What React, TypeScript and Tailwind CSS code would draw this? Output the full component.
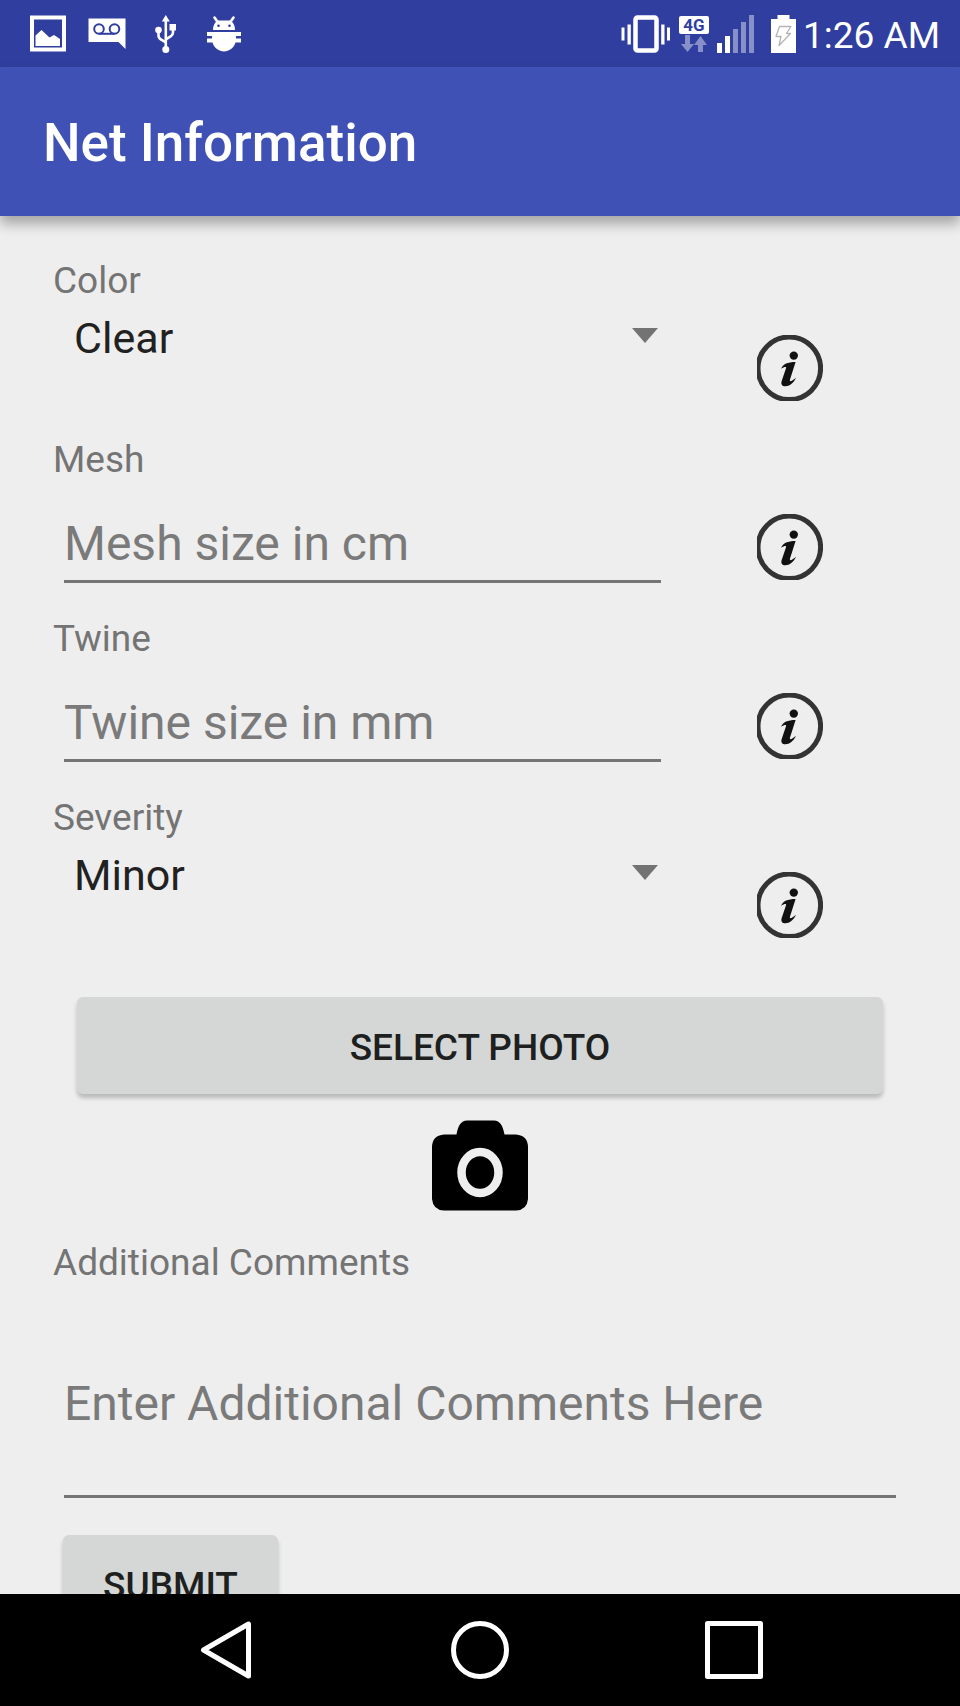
import { useState } from "react";
import type { ReactNode } from "react";

function PictureIcon() {
  return (
    <svg className="h-[38px] w-[38px]" viewBox="0 0 38 38" aria-hidden="true">
      <path fill="#fff" fillRule="evenodd" d="M1 .5h36v36H1zM5 4.500v28h28v-28z" />
      <path fill="#fff" d="M6.500 31V20.500l6-5.500 8 7.500 4.500-2.500 6 4v7z" />
    </svg>
  );
}

function VoicemailIcon() {
  return (
    <svg className="h-[38px] w-[38px]" viewBox="0 0 38 38" aria-hidden="true">
      <path fill="#fff" d="M.5 3.500h37V34l-7-7H.5z" />
      <g fill="none" stroke="#303f9f" strokeWidth="2">
        <circle cx="11" cy="14" r="4.800" />
        <circle cx="26.500" cy="14" r="4.800" />
        <path d="M11 18.800h15.500" />
      </g>
    </svg>
  );
}

function UsbIcon() {
  return (
    <svg className="h-[38px] w-[38px]" viewBox="0 0 38 38" aria-hidden="true">
      <g fill="none" stroke="#fff" strokeWidth="2.600">
        <path d="M18.800 5v30" />
        <path d="M11.500 15v5.500q0 2.500 2.300 3.800l5 3" />
        <path d="M26 12v5.500q0 2.500-2.300 3.800l-4.900 3" />
      </g>
      <path fill="#fff" d="m18.800 0 4 6.500h-8z" />
      <circle cx="11.500" cy="15" r="3.300" fill="#fff" />
      <circle cx="18.800" cy="34.500" r="3.500" fill="#fff" />
      <path fill="#fff" d="M22.500 9H29v6.500h-6.500z" />
    </svg>
  );
}

function BugIcon() {
  return (
    <svg className="h-[38px] w-[38px]" viewBox="0 0 38 38" aria-hidden="true">
      <path fill="#fff" d="M7 15q0-7 5-9.500h12q5 2.500 5 9.500z" />
      <path stroke="#fff" strokeWidth="2.600" strokeLinecap="round" d="m8.500 2.500 3.500 5M27.500 2.500l-3.500 5" />
      <circle cx="12.500" cy="10.800" r="1.300" fill="#303f9f" />
      <circle cx="23.500" cy="10.800" r="1.300" fill="#303f9f" />
      <path
        fill="#fff"
        d="M1 17h34v4h-5v2.500h5v4h-5.500C28 33 23 36.500 18 36.500S8 33 6.500 27.500H1v-4h5V21H1z"
      />
    </svg>
  );
}

function VibrateIcon() {
  return (
    <svg className="h-[38px] w-[50px]" viewBox="0 0 50 38" aria-hidden="true">
      <rect x="14.500" y="2.500" width="21" height="33" rx="2" fill="none" stroke="#fff" strokeWidth="4.500" />
      <path
        fill="#fff"
        d="M.5 12.500h3v13h-3zM6.500 9.500h3.300v20H6.500zM40.200 9.500h3.300v20h-3.300zM46 12.500h3v13h-3z"
      />
    </svg>
  );
}

function DataArrowsIcon() {
  return (
    <svg className="h-[17px] w-[28px]" viewBox="0 0 28 17" fill="#8790c8" aria-hidden="true">
      <path d="M5 0h5v9h4l-6.500 8L1 9h4z" />
      <path d="M18 17v-7h-4l6.500-9 6.500 9h-4v7z" />
    </svg>
  );
}

function SignalIcon() {
  return (
    <svg className="h-[38px] w-[38px]" viewBox="0 0 38 38" aria-hidden="true">
      <path fill="#fff" d="M0 28h5v10H0zM8 21h5v17H8z" />
      <path fill="#8790c8" d="M16 14h5v24h-5zM24 7h5v31h-5zM32 0h5v38h-5z" />
    </svg>
  );
}

function BatteryIcon() {
  return (
    <svg className="h-[38px] w-[26px]" viewBox="0 0 26 38" aria-hidden="true">
      <path fill="#fff" d="M6.500 0h12v4H25v34H0V4h6.500z" />
      <path
        fill="none"
        stroke="#b5b5b5"
        strokeWidth="1.300"
        strokeLinejoin="round"
        d="M8.500 11.500h11.500l-4.500 7h4L8 30.500l2-9H5z"
      />
    </svg>
  );
}

function InfoIcon() {
  return (
    <svg className="h-[66px] w-[66px]" viewBox="0 0 66 66" aria-hidden="true">
      <circle cx="32.300" cy="33.300" r="31.300" fill="none" stroke="#333" strokeWidth="5" />
      <circle cx="36.800" cy="20.600" r="4.200" fill="#111" />
      <path
        fill="#111"
        d="M24 33.800C26 29 30.500 27 38.600 27L33 44.500C32.300 47.300 34.500 46.600 39 42.800C36.500 48.300 32.500 51.300 28.500 51.300C24.800 51.300 23.700 49 24.700 46L29 33.300C29.600 31.200 27.500 31.500 24 33.800Z"
      />
    </svg>
  );
}

function CameraIcon() {
  return (
    <svg className="h-[91px] w-[96px]" viewBox="0 0 96 91" aria-hidden="true">
      <path d="M12 14.500h12.500C26 6 29 .5 35 .5h27c6 0 9 5.500 10.500 14H84q12 1 12 13V79q-1 11-12 11.500H12Q1 90 0 79V27.500q0-12 12-13Z" />
      <ellipse cx="48" cy="52.500" rx="18.500" ry="20.500" fill="none" stroke="#eee" strokeWidth="8.500" />
    </svg>
  );
}

function Field({ id, label, info, children }: { id: string; label: string; info: string; children: ReactNode }) {
  return (
    <div className="min-h-[179px]">
      <label htmlFor={id} className="block text-[37px] leading-[50px] text-[#747474]">
        {label}
      </label>
      <div className="flex items-start">
        <div className="min-w-0 flex-[29]">{children}</div>
        <div className="flex flex-[11] justify-center pt-[29px]">
          <button type="button" aria-label={info}>
            <InfoIcon />
          </button>
        </div>
      </div>
    </div>
  );
}

function Spinner({ id, options }: { id: string; options: string[] }) {
  const [value, setValue] = useState(options[0]);
  return (
    <div className="relative">
      <select
        id={id}
        value={value}
        onChange={(e) => setValue(e.target.value)}
        className="h-16 w-full appearance-none bg-transparent pr-12 pl-[21px] text-[43px] leading-[64px] text-[#212121] outline-none"
      >
        {options.map((o) => (
          <option key={o}>{o}</option>
        ))}
      </select>
      <svg
        className="pointer-events-none absolute top-[22px] right-[14px] h-[15px] w-[26px]"
        viewBox="0 0 26 15"
        fill="#737373"
        aria-hidden="true"
      >
        <path d="M0 0h26L13 15z" />
      </svg>
    </div>
  );
}

function TextField({ id, placeholder }: { id: string; placeholder: string }) {
  return (
    <div className="px-[11px]">
      <input
        id={id}
        type="text"
        placeholder={placeholder}
        className="block h-[98px] w-full border-b-[3px] border-[#757575] bg-transparent pt-[29px] pb-2 text-5xl leading-[58px] text-[#212121] outline-none placeholder:text-[#7a7a7a]"
      />
    </div>
  );
}

const raisedButton =
  "h-[97px] rounded-md bg-[#d5d7d6] pt-1 text-[37px] font-medium text-[#1e1f1f] uppercase shadow-[0_4px_4px_rgba(0,0,0,0.22)]";

export default function App() {
  return (
    <div className="flex h-screen flex-col bg-[#eeeeee] font-[Roboto,sans-serif]">
      <div className="flex h-[67px] shrink-0 items-center justify-between bg-[#303f9f] pr-5 pl-[29px] text-white">
        <div className="flex gap-[21px]">
          <PictureIcon />
          <VoicemailIcon />
          <UsbIcon />
          <BugIcon />
        </div>
        <div className="flex items-center gap-2">
          <VibrateIcon />
          <div className="flex w-[30px] flex-col items-center gap-px">
            <span className="w-full rounded-xs bg-white text-center text-[17px] leading-[18px] font-bold text-[#303f9f]">
              4G
            </span>
            <DataArrowsIcon />
          </div>
          <SignalIcon />
          <div className="flex items-center gap-[6px] pl-2">
            <BatteryIcon />
            <span className="pt-1 text-[37px] leading-[46px]">1:26 AM</span>
          </div>
        </div>
      </div>

      <header className="z-10 flex h-[149px] shrink-0 items-center bg-[#3f51b5] px-[43px] pt-[5px] shadow-[0_8px_12px_rgba(0,0,0,0.3)]">
        <h1 className="text-[53px] font-medium text-white">Net Information</h1>
      </header>

      <main className="min-h-0 flex-1 overflow-y-auto [scrollbar-width:none]">
        <form className="flex flex-col px-[53px] pt-10 pb-8" onSubmit={(e) => e.preventDefault()}>
          <Field id="color" label="Color" info="About color">
            <Spinner id="color" options={["Clear"]} />
          </Field>
          <Field id="mesh" label="Mesh" info="About mesh size">
            <TextField id="mesh" placeholder="Mesh size in cm" />
          </Field>
          <Field id="twine" label="Twine" info="About twine size">
            <TextField id="twine" placeholder="Twine size in mm" />
          </Field>
          <Field id="severity" label="Severity" info="About severity">
            <Spinner id="severity" options={["Minor"]} />
          </Field>

          <div className="flex flex-col gap-[26px] px-6 pt-[25px] pb-[27px]">
            <button type="button" className={raisedButton}>
              Select photo
            </button>
            <button type="button" aria-label="Take photo" className="self-center">
              <CameraIcon />
            </button>
          </div>

          <label htmlFor="comments" className="text-[37px] leading-[50px] text-[#747474]">
            Additional Comments
          </label>
          <div className="px-[11px]">
            <textarea
              id="comments"
              placeholder="Enter Additional Comments Here"
              className="block h-[210px] w-full resize-none border-b-[3px] border-[#757575] bg-transparent pt-[87px] text-5xl leading-[58px] text-[#212121] outline-none placeholder:text-[#7a7a7a]"
            />
          </div>

          <div className="px-[10px] pt-[37px]">
            <button type="submit" className={`${raisedButton} w-[215px]`}>
              Submit
            </button>
          </div>
        </form>
      </main>

      <nav className="grid h-28 shrink-0 grid-cols-3 place-items-center bg-black px-[99px]">
        <button type="button" aria-label="Back">
          <svg className="h-[58px] w-[58px]" viewBox="0 0 58 58" fill="none" stroke="#fff" strokeWidth="5" strokeLinejoin="round">
            <path d="M51.500 3v52L6.500 29z" />
          </svg>
        </button>
        <button type="button" aria-label="Home">
          <svg className="h-[58px] w-[58px]" viewBox="0 0 58 58" fill="none" stroke="#fff" strokeWidth="5">
            <circle cx="29" cy="29" r="26.500" />
          </svg>
        </button>
        <button type="button" aria-label="Recent apps">
          <svg className="h-[58px] w-[58px]" viewBox="0 0 58 58" fill="none" stroke="#fff" strokeWidth="5" strokeLinejoin="round">
            <path d="M2.500 2.500h53v53h-53z" />
          </svg>
        </button>
      </nav>
    </div>
  );
}
